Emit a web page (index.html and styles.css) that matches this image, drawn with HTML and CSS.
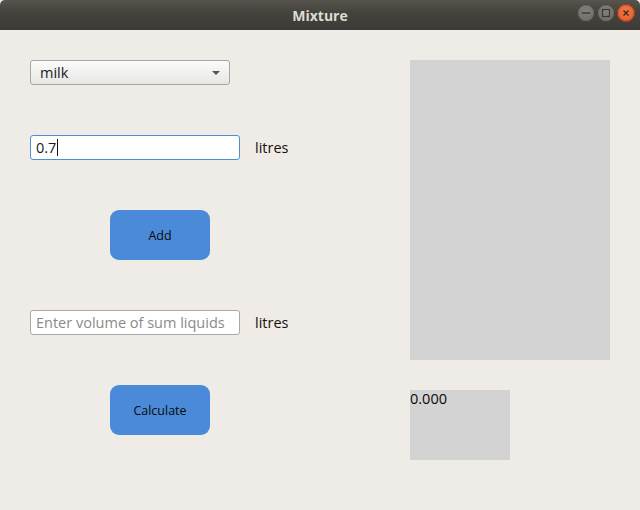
FILE: index.html
```html
<!DOCTYPE html>
<html>
<head>
<meta charset="utf-8">
<link rel="stylesheet" href="styles.css">
</head>
<body>
<div class="window">
  <div class="titlebar">
    <span class="title">Mixture</span>
    <div class="wbtns">
      <span class="wbtn min"><svg width="18" height="18" viewBox="0 0 18 18"><line x1="5" y1="9" x2="13" y2="9" stroke="#3a3935" stroke-width="1.4"/></svg></span>
      <span class="wbtn max"><svg width="18" height="18" viewBox="0 0 18 18"><rect x="5.5" y="5.5" width="7" height="7" fill="none" stroke="#3a3935" stroke-width="1.2"/></svg></span>
      <span class="wbtn close"><svg width="18" height="18" viewBox="0 0 18 18"><path d="M6.5 6.5 L11.5 11.5 M11.5 6.5 L6.5 11.5" stroke="#3a2a20" stroke-width="1.4"/></svg></span>
    </div>
  </div>
  <div class="content">
    <div class="left">
      <div class="combo"><span>milk</span><span class="arrow"></span></div>
      <div class="row"><div class="input focus">0.7<span class="caret"></span></div><span class="unit">litres</span></div>
      <div class="btn">Add</div>
      <div class="row"><div class="input placeholder">Enter volume of sum liquids</div><span class="unit">litres</span></div>
      <div class="btn">Calculate</div>
    </div>
    <div class="right">
      <div class="canvas"></div>
      <div class="result">0.000</div>
    </div>
  </div>
</div>
</body>
</html>
```
FILE: styles.css
```css
html, body { margin: 0; padding: 0; }
body { width: 640px; height: 510px; overflow: hidden; background: #efebe7; font-family: "Open Sans", "DejaVu Sans", sans-serif; }
.window { width: 640px; height: 510px; background: #efebe7; }
.titlebar { height: 30px; background: linear-gradient(#57544d, #45433e 40%, #3c3b37); position: relative; display: flex; align-items: center; justify-content: center; border-radius: 5px 5px 0 0; }
.title { color: #dfdbd2; font-weight: bold; font-size: 14px; }
.wbtns { position: absolute; right: 5px; top: 4px; display: flex; gap: 2px; }
.wbtn { width: 18px; height: 18px; border-radius: 50%; display: flex; }
.wbtn.min, .wbtn.max { background: radial-gradient(circle at 50% 40%, #85827c, #66645f); box-shadow: inset 0 0 0 1px #3e3d39; }
.wbtn.close { background: radial-gradient(circle at 50% 40%, #f27a4a, #e0501e); box-shadow: inset 0 0 0 1px #8a3a1c; }
.content { display: flex; padding: 30px 0 0 30px; }
.left { width: 380px; display: flex; flex-direction: column; align-items: flex-start; }
.combo { box-sizing: border-box; width: 200px; height: 25px; border: 1px solid #a8a6a2; border-radius: 3px; background: linear-gradient(#fbfbfb, #e7e6e4); display: flex; align-items: center; justify-content: space-between; padding: 0 9px 0 9px; font-size: 14.5px; color: #1a1a1a; }
.arrow { width: 0; height: 0; border-left: 4px solid transparent; border-right: 4px solid transparent; border-top: 4px solid #555; margin-top: 1px; }
.row { display: flex; align-items: center; margin-top: 50px; }
.input { box-sizing: border-box; width: 210px; height: 25px; border: 1px solid #aaa8a4; border-radius: 3px; background: #fff; display: flex; align-items: center; padding: 0 5px; font-size: 14.5px; color: #1a1a1a; }
.input.focus { border-color: #4a90d9; }
.input.placeholder { color: #8a8a8a; }
.caret { display: inline-block; width: 1px; height: 17px; background: #111; margin-left: 1px; }
.unit { margin-left: 15px; font-size: 14.5px; color: #1a1106; }
.btn { margin-top: 50px; margin-left: 80px; width: 100px; height: 50px; border-radius: 9px; background: #4a8ad8; display: flex; align-items: center; justify-content: center; font-size: 12.5px; color: #0a0a0a; }
.right { display: flex; flex-direction: column; }
.canvas { width: 200px; height: 300px; background: #d3d3d3; }
.result { margin-top: 30px; width: 100px; height: 70px; background: #d3d3d3; font-size: 14.5px; color: #0a0a0a; line-height: 18px; }
```
